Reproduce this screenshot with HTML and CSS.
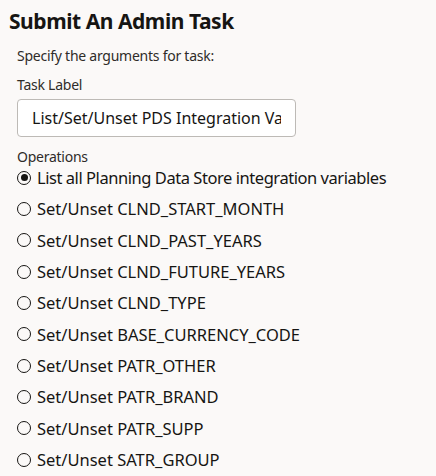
FILE: index.html
```html
<!DOCTYPE html>
<html>
<head>
<meta charset="utf-8">
<link rel="stylesheet" href="styles.css">
</head>
<body>
<div class="page">
  <h1 class="title">Submit An Admin Task</h1>
  <div class="form">
    <p class="hint">Specify the arguments for task:</p>
    <label class="label">Task Label</label>
    <div class="input"><span class="input-text">List/Set/Unset PDS Integration Variables</span></div>
    <div class="label ops-label">Operations</div>
    <ul class="radios">
      <li class="radio checked"><span class="dot"></span><span class="radio-text">List all Planning Data Store integration variables</span></li>
      <li class="radio"><span class="dot"></span><span class="radio-text">Set/Unset CLND_START_MONTH</span></li>
      <li class="radio"><span class="dot"></span><span class="radio-text">Set/Unset CLND_PAST_YEARS</span></li>
      <li class="radio"><span class="dot"></span><span class="radio-text">Set/Unset CLND_FUTURE_YEARS</span></li>
      <li class="radio"><span class="dot"></span><span class="radio-text">Set/Unset CLND_TYPE</span></li>
      <li class="radio"><span class="dot"></span><span class="radio-text">Set/Unset BASE_CURRENCY_CODE</span></li>
      <li class="radio"><span class="dot"></span><span class="radio-text">Set/Unset PATR_OTHER</span></li>
      <li class="radio"><span class="dot"></span><span class="radio-text">Set/Unset PATR_BRAND</span></li>
      <li class="radio"><span class="dot"></span><span class="radio-text">Set/Unset PATR_SUPP</span></li>
      <li class="radio"><span class="dot"></span><span class="radio-text">Set/Unset SATR_GROUP</span></li>
    </ul>
  </div>
</div>
</body>
</html>
```
FILE: styles.css
```css
html, body {
  margin: 0;
  padding: 0;
  background: #fbf9f8;
}
body {
  font-family: "Noto Sans", "Open Sans", sans-serif;
  color: #161513;
  width: 436px;
  height: 476px;
  overflow: hidden;
}
.page {
  padding: 6px 0 0 9px;
}
.title {
  margin: 0;
  font-size: 21px;
  font-weight: 700;
  line-height: 30px;
  letter-spacing: -0.45px;
  color: #161513;
}
.form {
  padding-left: 8px;
}
.hint {
  margin: 10px 0 0 0;
  font-size: 14px;
  line-height: 20px;
  letter-spacing: -0.25px;
  color: #2f2c29;
}
.label {
  display: block;
  font-size: 14px;
  line-height: 20px;
  letter-spacing: -0.25px;
  color: #2f2c29;
  margin-top: 9px;
}
.input {
  margin-top: 4px;
  width: 279px;
  height: 38px;
  box-sizing: border-box;
  border: 1px solid #bdbab6;
  border-radius: 4px;
  background: #ffffff;
  padding: 0 14px;
  display: flex;
  align-items: center;
  overflow: hidden;
}
.input-text {
  white-space: nowrap;
  overflow: hidden;
  font-size: 16px;
  color: #161513;
}
.ops-label {
  margin-top: 10px;
}
.radios {
  list-style: none;
  margin: -5px 0 0 0;
  padding: 0;
}
.radio {
  display: flex;
  align-items: center;
  gap: 6px;
  height: 31.33px;
  font-size: 16.5px;
  color: #161513;
}
.radio-text {
  white-space: nowrap;
}
.checked .radio-text {
  letter-spacing: -0.45px;
}
.dot {
  width: 14px;
  height: 14px;
  box-sizing: border-box;
  border: 1.4px solid #161513;
  border-radius: 50%;
  flex: none;
  position: relative;
}
.checked .dot::after {
  content: "";
  position: absolute;
  left: 50%;
  top: 50%;
  width: 7px;
  height: 7px;
  margin: -3.5px 0 0 -3.5px;
  border-radius: 50%;
  background: #161513;
}
```
